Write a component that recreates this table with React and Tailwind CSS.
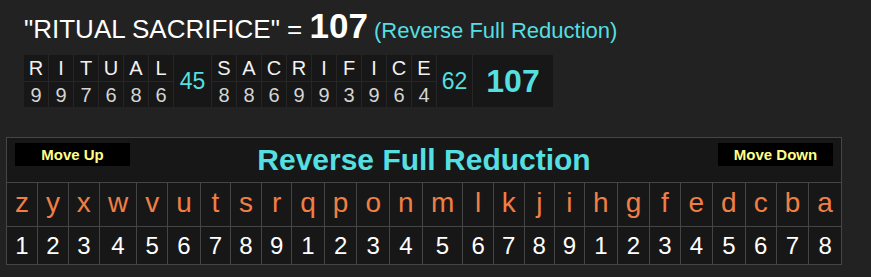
import React from 'react';

const WORDS = [
  { letters: 'RITUAL', values: [9, 9, 7, 6, 8, 6], total: 45, width: 'w-[37px]' },
  { letters: 'SACRIFICE', values: [8, 8, 6, 9, 9, 3, 9, 6, 4], total: 62, width: 'w-[35px]' },
];

const ALPHABET = 'zyxwvutsrqponmlkjihgfedcba'.split('');
const reduce = (i) => (i % 9) + 1;

function LetterCell({ letter, value }) {
  return (
    <div className="flex flex-col gap-px">
      <div className="w-[24px] h-[26px] bg-[#171717] flex items-center justify-center text-[20px] leading-none text-[#f2f2f2]">
        {letter}
      </div>
      <div className="w-[24px] h-[25px] bg-[#171717] flex items-center justify-center text-[20px] leading-none text-[#d4d4d4]">
        {value}
      </div>
    </div>
  );
}

export default function App() {
  return (
    <div className="min-h-screen w-full bg-[#222222] font-['Liberation_Sans',Arial,sans-serif] overflow-hidden">
      {/* ── Phrase heading ── */}
      <div className="pl-[24px] pt-[9px] text-[26px] leading-[34px] text-white whitespace-nowrap">
        <span>"RITUAL SACRIFICE" = </span>
        <span className="text-[35px] font-bold">107</span>
        <span className="text-[22px] text-[#55dfe0]"> (Reverse Full Reduction)</span>
      </div>

      {/* ── Letter breakdown ── */}
      <div className="ml-[24px] mt-[7px] inline-flex gap-px bg-[#262626]">
        {WORDS.map((word) => (
          <React.Fragment key={word.letters}>
            {word.letters.split('').map((l, i) => (
              <LetterCell key={i} letter={l} value={word.values[i]} />
            ))}
            <div className={`${word.width} h-[52px] bg-[#171717] flex items-center justify-center text-[23px] text-[#55dfe0]`}>
              {word.total}
            </div>
          </React.Fragment>
        ))}
        <div className="w-[80px] h-[52px] bg-[#171717] flex items-center justify-center text-[32px] font-bold text-[#55dfe0]">
          107
        </div>
      </div>

      {/* ── Cipher chart ── */}
      <div className="ml-[6px] mt-[30px] w-[836px]">
        <table className="w-full border-collapse bg-[#171717]">
          <tbody>
            <tr>
              <td colSpan={26} className="border border-[#454545] p-0">
                <div className="h-[44px] grid grid-cols-[115px_1fr_115px] px-[8px]">
                  <button className="mt-[5px] h-[23px] bg-black text-[15px] font-bold text-[#ffff88] leading-none">
                    Move Up
                  </button>
                  <div className="self-center text-center text-[30px] font-bold text-[#55dfe0] leading-none">
                    Reverse Full Reduction
                  </div>
                  <button className="mt-[5px] h-[23px] bg-black text-[15px] font-bold text-[#ffff88] leading-none">
                    Move Down
                  </button>
                </div>
              </td>
            </tr>
            <tr>
              {ALPHABET.map((l) => (
                <td key={l} className="border border-[#454545] px-[7px] pt-0 pb-[4px] text-center text-[28px] leading-[39px] text-[#ef7f45]">
                  {l}
                </td>
              ))}
            </tr>
            <tr>
              {ALPHABET.map((l, i) => (
                <td key={l} className="border border-[#454545] px-[7px] py-0 text-center text-[24px] leading-[37px] text-white">
                  {reduce(i)}
                </td>
              ))}
            </tr>
          </tbody>
        </table>
      </div>
    </div>
  );
}
